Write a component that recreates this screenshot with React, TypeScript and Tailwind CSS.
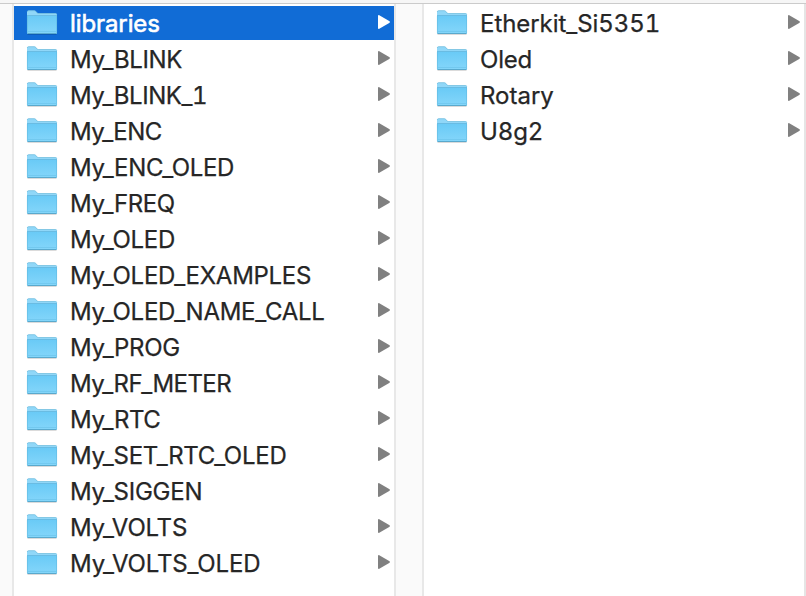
type Entry = { name: string; tracking: string };

const projects: Entry[] = [
  { name: "libraries", tracking: "tracking-[-0.1px]" },
  { name: "My_BLINK", tracking: "tracking-[-0.4px]" },
  { name: "My_BLINK_1", tracking: "tracking-[-0.45px]" },
  { name: "My_ENC", tracking: "tracking-[-0.6px]" },
  { name: "My_ENC_OLED", tracking: "tracking-[-0.35px]" },
  { name: "My_FREQ", tracking: "tracking-[-0.4px]" },
  { name: "My_OLED", tracking: "tracking-[-0.3px]" },
  { name: "My_OLED_EXAMPLES", tracking: "tracking-[-0.28px]" },
  { name: "My_OLED_NAME_CALL", tracking: "tracking-[-0.28px]" },
  { name: "My_PROG", tracking: "tracking-[-0.35px]" },
  { name: "My_RF_METER", tracking: "tracking-[-0.55px]" },
  { name: "My_RTC", tracking: "tracking-[-0.4px]" },
  { name: "My_SET_RTC_OLED", tracking: "tracking-[-0.27px]" },
  { name: "My_SIGGEN", tracking: "tracking-[-0.25px]" },
  { name: "My_VOLTS", tracking: "tracking-[-0.2px]" },
  { name: "My_VOLTS_OLED", tracking: "tracking-[-0.15px]" },
];

const libraries: Entry[] = [
  { name: "Etherkit_Si5351", tracking: "tracking-[-0.05px]" },
  { name: "Oled", tracking: "tracking-[-0.2px]" },
  { name: "Rotary", tracking: "tracking-[0px]" },
  { name: "U8g2", tracking: "tracking-[-0.1px]" },
];

function FolderIcon() {
  return (
    <svg width="32" height="26" viewBox="0 0 32 26" className="shrink-0">
      <path d="M1.5 24.5H30.5" stroke="#000" strokeOpacity=".14" strokeWidth="1" />
      <path d="M1 2Q1 .4 2.6.4H8.2Q9.3.4 9.9 1.3L11 2.6Q11.5 3.2 12.5 3.2H29.5Q31 3.2 31 4.7V8H1Z" fill="#90d7f8" />
      <path d="M1.3 2Q1.3.7 2.6.7H8.2Q9.2.7 9.8 1.5L10.8 2.8Q11.4 3.5 12.5 3.5H29.5Q30.5 3.5 30.7 4.5" fill="none" stroke="#72bddd" strokeWidth=".7" />
      <path d="M1 5.5H31V23Q31 24 30 24H2Q1 24 1 23Z" fill="url(#folder-front)" />
      <path d="M1 5.5H31" stroke="#69bce3" strokeWidth="1" />
      <path d="M1.4 6V23M30.6 6V23" stroke="#5eb5dd" strokeOpacity=".65" strokeWidth=".8" />
      <path d="M2 21.5H30" stroke="#67c0e8" strokeOpacity=".7" strokeWidth=".8" />
      <path d="M1.5 23.5H30.5" stroke="#59a9cd" strokeWidth="1" />
    </svg>
  );
}

function Row({ entry, selected = false }: { entry: Entry; selected?: boolean }) {
  return (
    <li className={`mb-0.5 flex h-[34px] items-start pl-3 pr-1 ${selected ? "bg-[#116cd6] text-white" : "text-[#262626]"}`}>
      <span className="mt-1 flex">
        <FolderIcon />
      </span>
      <span
        className={`ml-3 flex-1 whitespace-pre text-[24px] leading-[36px] tabular-nums ${selected ? "[-webkit-text-stroke:0.6px_currentColor]" : "[-webkit-text-stroke:0.25px_currentColor]"} ${entry.tracking}`}
      >
        {entry.name}
      </span>
      <svg width="12" height="14" viewBox="0 0 12 14" className={`mt-[9px] shrink-0 ${selected ? "text-white" : "text-[#808080]"}`}>
        <path d="M0 1Q0-.2 1.3.2L11.2 5.9Q12.7 7 11.2 8.1L1.3 13.8Q0 14.2 0 13Z" fill="currentColor" />
      </svg>
    </li>
  );
}

export default function App() {
  return (
    <div className="flex h-[596px] w-[806px] flex-col overflow-hidden bg-white font-['Inter','Liberation_Sans',sans-serif]">
      <svg width="0" height="0" className="absolute">
        <defs>
          <linearGradient id="folder-front" x1="0" y1="0" x2="0" y2="1">
            <stop stopColor="#69caf6" />
            <stop offset="1" stopColor="#85d6fa" />
          </linearGradient>
        </defs>
      </svg>
      <header className="h-1 shrink-0 border-b border-[#cbcbcb] bg-[#f6f6f6]" />
      <main className="flex min-h-0 flex-1">
        <div className="w-[14px] shrink-0 border-r-2 border-[#e8e8e8] bg-[#fafafa]" />
        <ul className="w-[380px] shrink-0 pt-0.5">
          {projects.map((entry, i) => (
            <Row key={entry.name} entry={entry} selected={i === 0} />
          ))}
        </ul>
        <div className="w-[30px] shrink-0 border-x-2 border-[#e8e8e8] bg-[#fafafa]" />
        <ul className="w-[380px] shrink-0 pt-0.5">
          {libraries.map((entry) => (
            <Row key={entry.name} entry={entry} />
          ))}
        </ul>
        <div className="w-0.5 shrink-0 bg-[#e5e5e5]" />
      </main>
    </div>
  );
}
